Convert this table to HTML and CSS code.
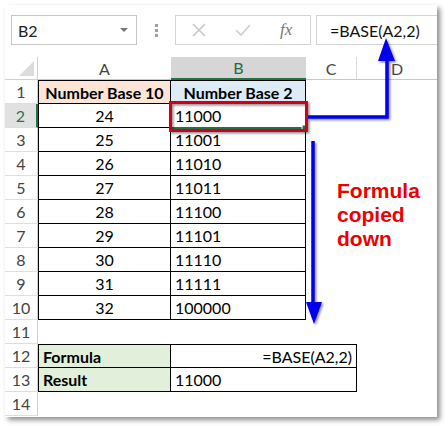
FILE: index.html
```html
<!DOCTYPE html>
<html>
<head>
<meta charset="utf-8">
<link rel="stylesheet" href="styles.css">
</head>
<body>
<div class="card">
  <div class="fbar">
    <div class="namebox"><span>B2</span><span class="caret"></span></div>
    <div class="dots"><i></i><i></i><i></i></div>
    <div class="btns">
      <svg class="ico" width="14" height="14" viewBox="0 0 14 14"><path d="M1 1L13 13M13 1L1 13" stroke="#c8c8c8" stroke-width="1.6" fill="none"/></svg>
      <svg class="ico" width="16" height="14" viewBox="0 0 16 14"><path d="M1 7L6 12L15 2" stroke="#d0d0d0" stroke-width="1.6" fill="none"/></svg>
      <span class="fx">fx</span>
    </div>
    <div class="formula">=BASE(A2,2)</div>
  </div>
  <div class="grid">
    <div class="corner"><span class="tri"></span></div>
    <div class="ch">A</div>
    <div class="ch sel">B</div>
    <div class="ch sep">C</div>
    <div class="ch">D</div>

    <div class="rh">1</div><div class="c b bt bl hdrA bold ctr">Number Base 10</div><div class="c b bt hdrB bold ctr">Number Base 2</div><div class="c"></div><div class="c"></div>
    <div class="rh selr">2</div><div class="c b bl ctr">24</div><div class="c b">11000</div><div class="c"></div><div class="c"></div>
    <div class="rh">3</div><div class="c b bl ctr">25</div><div class="c b">11001</div><div class="c"></div><div class="c"></div>
    <div class="rh">4</div><div class="c b bl ctr">26</div><div class="c b">11010</div><div class="c"></div><div class="c"></div>
    <div class="rh">5</div><div class="c b bl ctr">27</div><div class="c b">11011</div><div class="c"></div><div class="c"></div>
    <div class="rh">6</div><div class="c b bl ctr">28</div><div class="c b">11100</div><div class="c"></div><div class="c"></div>
    <div class="rh">7</div><div class="c b bl ctr">29</div><div class="c b">11101</div><div class="c"></div><div class="c"></div>
    <div class="rh">8</div><div class="c b bl ctr">30</div><div class="c b">11110</div><div class="c"></div><div class="c"></div>
    <div class="rh">9</div><div class="c b bl ctr">31</div><div class="c b">11111</div><div class="c"></div><div class="c"></div>
    <div class="rh">10</div><div class="c b bl ctr">32</div><div class="c b">100000</div><div class="c"></div><div class="c"></div>
    <div class="rh">11</div><div class="c"></div><div class="c"></div><div class="c"></div><div class="c"></div>
    <div class="rh">12</div><div class="c b bt bl grn bold">Formula</div><div class="c b bt rt span2">=BASE(A2,2)</div><div class="c"></div>
    <div class="rh">13</div><div class="c b bl grn bold">Result</div><div class="c b span2">11000</div><div class="c"></div>
    <div class="rh">14</div><div class="c"></div><div class="c"></div><div class="c"></div><div class="c"></div>
  </div>

  <svg class="overlay" width="440" height="420" viewBox="0 0 440 420">
    <defs>
      <filter id="sh" x="-20%" y="-20%" width="140%" height="140%">
        <feDropShadow dx="1.5" dy="1.5" stdDeviation="1" flood-color="#000" flood-opacity="0.45"/>
      </filter>
    </defs>
    <rect x="165" y="122" width="136" height="2" fill="#217346"/>
    <rect x="297" y="120" width="5" height="5" fill="#217346" stroke="#fff" stroke-width="1"/>
    <rect x="165.5" y="97.5" width="136" height="28" fill="none" stroke="#d0021b" stroke-width="3" filter="url(#sh)"/>
    <g filter="url(#sh)" fill="#0000ee" stroke="#0000ee">
      <polyline points="303,112 382,112 382,52" fill="none" stroke-width="3.5"/>
      <polygon points="381,33 373,56 390,56" stroke="none"/>
    </g>
    <g filter="url(#sh)" fill="#0000ee" stroke="#0000ee">
      <line x1="308" y1="136" x2="308" y2="300" stroke-width="3.5"/>
      <polygon points="301,297 317,297 309,319" stroke="none"/>
    </g>
  </svg>
  <div class="note">Formula<br>copied<br>down</div>
</div>
</body>
</html>
```

FILE: styles.css
```css
html, body {
  margin: 0;
  padding: 0;
  background: #fff;
}
body {
  width: 448px;
  height: 426px;
  overflow: hidden;
}
.card {
  position: relative;
  margin: 5px 0 0 5px;
  width: 432px;
  height: 412px;
  background: #fff;
  box-shadow: 3px 3px 5px rgba(0,0,0,0.45);
  font-family: Lato, "Open Sans", sans-serif;
  font-size: 16px;
  color: #000;
}
.fbar {
  display: flex;
  align-items: stretch;
  height: 30px;
  padding-top: 10px;
}
.namebox {
  margin-left: 6px;
  width: 126px;
  box-sizing: border-box;
  border: 1px solid #c6c6c6;
  display: flex;
  align-items: center;
  justify-content: space-between;
  padding: 0 8px 0 6px;
  color: #222;
}
.caret {
  width: 0; height: 0;
  border-left: 4px solid transparent;
  border-right: 4px solid transparent;
  border-top: 4px solid #777;
}
.dots {
  width: 38px;
  display: flex;
  flex-direction: column;
  align-items: center;
  justify-content: center;
  gap: 2px;
}
.dots i {
  display: block;
  width: 3px; height: 3px;
  background: #a0a0a0;
}
.btns {
  width: 136px;
  box-sizing: border-box;
  border: 1px solid #d4d4d4;
  display: flex;
  align-items: center;
  padding-left: 16px;
  gap: 29px;
}
.fx {
  font-family: "Liberation Serif", serif;
  font-style: italic;
  font-size: 17px;
  color: #777;
}
.formula {
  margin-left: 5px;
  flex: 1;
  box-sizing: border-box;
  border: 1px solid #d4d4d4;
  border-right: none;
  display: flex;
  align-items: center;
  padding-left: 13px;
  color: #111;
}
.grid {
  margin-top: 12px;
  display: grid;
  grid-template-columns: 33px 133px 135px 51px 80px;
  grid-template-rows: 23px repeat(14, 24px);
}
.corner {
  border-bottom: 1px solid #d0d0d0;
  border-right: 1px solid #d0d0d0;
  box-sizing: border-box;
  position: relative;
}
.tri {
  position: absolute;
  right: 3px; bottom: 3px;
  width: 0; height: 0;
  border-left: 15px solid transparent;
  border-bottom: 15px solid #dcdcdc;
}
.ch {
  box-sizing: border-box;
  border-bottom: 1px solid #c8c8c8;
  display: flex;
  align-items: center;
  justify-content: center;
  color: #444;
}
.ch.sep { border-right: 1px solid #dadada; }
.ch.sel {
  background: #d6d6d6;
  border-bottom: 2px solid #217346;
  color: #1f6b43;
}
.rh {
  box-sizing: border-box;
  border-bottom: 1px solid #dedede;
  border-right: 1px solid #d0d0d0;
  display: flex;
  align-items: center;
  justify-content: center;
  color: #444;
}
.rh.selr {
  background: #e1e1e1;
  border-right: 2px solid #217346;
  color: #3b6b50;
}
.c {
  box-sizing: border-box;
  display: flex;
  align-items: center;
  padding: 0 4px;
  white-space: nowrap;
}
.c.b {
  border-right: 1px solid #000;
  border-bottom: 1px solid #000;
}
.c.bt { border-top: 1px solid #000; }
.c.bl { border-left: 1px solid #000; }
.span2 { grid-column: span 2; }
.ctr { justify-content: center; }
.rt { justify-content: flex-end; }
.bold { font-weight: bold; }
.hdrA { background: #fce4d6; }
.hdrB { background: #ddebf7; }
.grn { background: #e2efda; }
.overlay {
  position: absolute;
  left: 0; top: 0;
  pointer-events: none;
}
.note {
  position: absolute;
  left: 332px;
  top: 174px;
  font-family: "Liberation Sans", Arial, sans-serif;
  font-weight: bold;
  font-size: 21px;
  line-height: 24px;
  color: #ee0000;
}
```
